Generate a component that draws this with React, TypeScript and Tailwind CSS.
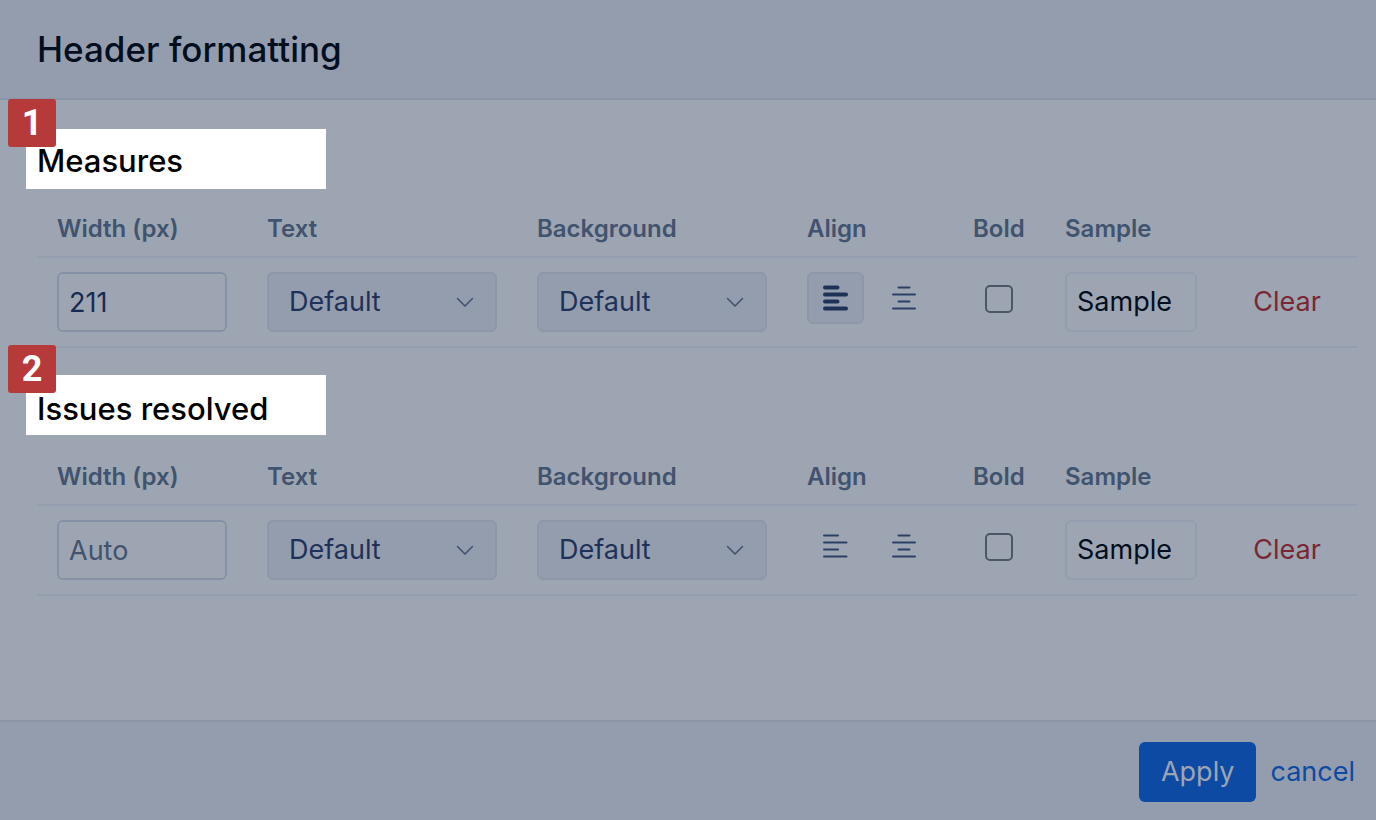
import { useState } from "react";
import clsx from "clsx";

type Align = "left" | "center";

interface FormatSection {
  id: string;
  title: string;
  width: string;
  align: Align | null;
  calloutClass: string;
}

const SECTIONS: FormatSection[] = [
  { id: "measures", title: "Measures", width: "211", align: "left", calloutClass: "top-0" },
  { id: "resolved", title: "Issues resolved", width: "", align: null, calloutClass: "-top-0.5" },
];

const ALIGN_PATHS = {
  left: "M2 2.5H16M2 9.5H24.5M2 16.5H16M2 23.5H24.5",
  center: "M7.5 2.5H18.5M2 9.5H24M7.5 16.5H18.5M2 23.5H24",
};

const ALIGN_PATHS_ACTIVE = {
  left: "M3 2.5H15.5M3 9.5H24M3 16.5H15.5M3 23.5H24",
  center: "M8.5 2.5H17.5M3 9.5H23M8.5 16.5H17.5M3 23.5H23",
};

function AlignIcon({ type, active }: { type: Align; active: boolean }) {
  return (
    <svg width="27" height="27" viewBox="0 0 27 27" fill="none" aria-hidden="true">
      <path
        d={active ? ALIGN_PATHS_ACTIVE[type] : ALIGN_PATHS[type]}
        stroke="currentColor"
        strokeWidth={active ? 4 : 2}
        strokeLinecap="round"
      />
    </svg>
  );
}

function ColorSelect({ label }: { label: string }) {
  return (
    <div className="relative">
      <select
        aria-label={label}
        className="block h-[60px] w-full appearance-none rounded-md border-2 border-[#8d97a8] bg-[#949dae] px-5 text-[27px] text-[#1e3258]"
      >
        <option>Default</option>
      </select>
      <svg
        className="pointer-events-none absolute top-[25px] right-[23px] text-[#3f4f70]"
        width="18"
        height="12"
        viewBox="0 0 18 12"
        fill="none"
        aria-hidden="true"
      >
        <path d="M1.5 1.5L9 9L16.5 1.5" stroke="currentColor" strokeWidth="1.5" strokeLinecap="round" strokeLinejoin="round" />
      </svg>
    </div>
  );
}

function AlignButtons({ value, onChange }: { value: Align | null; onChange: (a: Align) => void }) {
  return (
    <div className="flex gap-3">
      {(["left", "center"] as const).map((type) => (
        <button
          key={type}
          type="button"
          aria-label={`Align ${type}`}
          aria-pressed={value === type}
          onClick={() => onChange(type)}
          className={clsx(
            "flex h-[52px] w-[57px] items-center justify-center rounded-md border-2",
            value === type
              ? "border-[#8d97a8] bg-[#949dae] text-[#1e3258]"
              : "border-transparent text-[#2c4066]"
          )}
        >
          <AlignIcon type={type} active={value === type} />
        </button>
      ))}
    </div>
  );
}

function HeaderSection({ section, index }: { section: FormatSection; index: number }) {
  const [width, setWidth] = useState(section.width);
  const [align, setAlign] = useState(section.align);
  const [bold, setBold] = useState(false);

  const clear = () => {
    setWidth("");
    setAlign(null);
    setBold(false);
  };

  return (
    <section>
      <div className="relative h-[60px]">
        <div className={clsx("absolute -left-[11px] h-[60px] w-[300px] bg-white", section.calloutClass)}>
          <span className="absolute -top-[30px] -left-[18px] flex size-12 items-center justify-center rounded-[3px] bg-[#b63a3a] font-['Roboto'] text-4xl font-bold text-white">
            {index + 1}
          </span>
        </div>
        <h2 className="relative pt-3 text-[31px] leading-10 font-medium text-black">{section.title}</h2>
      </div>

      <table className="mt-3 w-full table-fixed border-collapse text-left">
        <colgroup>
          <col className="w-[210px]" />
          <col className="w-[270px]" />
          <col className="w-[270px]" />
          <col className="w-[166px]" />
          <col className="w-[92px]" />
          <col className="w-[172px]" />
          <col />
        </colgroup>
        <thead>
          <tr className="h-14 border-b-2 border-[#949dae] text-2xl text-[#41536f]">
            <th className="px-5 font-semibold">Width (px)</th>
            <th className="px-5 font-semibold">Text</th>
            <th className="px-5 font-semibold">Background</th>
            <th className="px-5 font-semibold">Align</th>
            <th className="pl-5 font-semibold">Bold</th>
            <th className="px-5 font-semibold">Sample</th>
            <td />
          </tr>
        </thead>
        <tbody>
          <tr className="border-b-2 border-[#949dae] align-top text-[27px]">
            <td className="px-5 py-3.5">
              <input
                type="text"
                aria-label="Width (px)"
                placeholder="Auto"
                value={width}
                onChange={(e) => setWidth(e.target.value)}
                className="block h-[60px] w-full rounded-md border-2 border-[#8791a5] bg-transparent px-2.5 text-[#162b53] placeholder:text-[#41536f]"
              />
            </td>
            <td className="px-5 py-3.5"><ColorSelect label="Text" /></td>
            <td className="px-5 py-3.5"><ColorSelect label="Background" /></td>
            <td className="py-3.5 pl-5"><AlignButtons value={align} onChange={setAlign} /></td>
            <td className="py-3.5">
              <input
                type="checkbox"
                aria-label="Bold"
                checked={bold}
                onChange={(e) => setBold(e.target.checked)}
                className="mx-auto mt-[13px] block size-7 appearance-none rounded-[5px] border-2 border-[#4b5666] checked:bg-[#0c4aa3]"
              />
            </td>
            <td className="px-5 py-3.5">
              <div className={clsx("flex h-[60px] items-center rounded-md border-2 border-[#949dae] px-2.5 text-[#030e1f]", bold && "font-bold")}>
                Sample
              </div>
            </td>
            <td className="py-3.5 text-center">
              <button type="button" onClick={clear} className="h-[60px] text-[#792734]">
                Clear
              </button>
            </td>
          </tr>
        </tbody>
      </table>
    </section>
  );
}

export default function App() {
  return (
    <div className="flex min-h-screen flex-col bg-[#9ea5b2] font-['Inter',sans-serif]">
      <header className="flex h-[100px] items-center border-b-2 border-[#8a94a6] bg-[#949dae] px-[37px]">
        <h1 className="text-[35px] leading-10 font-medium text-[#030e1f]">Header formatting</h1>
      </header>

      <main className="flex flex-1 flex-col gap-[29px] pt-[29px] pr-[19px] pb-8 pl-[37px]">
        {SECTIONS.map((section, i) => (
          <HeaderSection key={section.id} section={section} index={i} />
        ))}
      </main>

      <footer className="flex items-center justify-end gap-3.5 border-t-2 border-[#8a94a6] bg-[#949dae] pt-5 pr-[21px] pb-[18px] text-[27px]">
        <button type="button" className="h-[60px] rounded-md bg-[#0c4aa3] px-[22px] text-[#9ea5b2]">
          Apply
        </button>
        <a href="#" className="text-[#0c4aa3]">cancel</a>
      </footer>
    </div>
  );
}
